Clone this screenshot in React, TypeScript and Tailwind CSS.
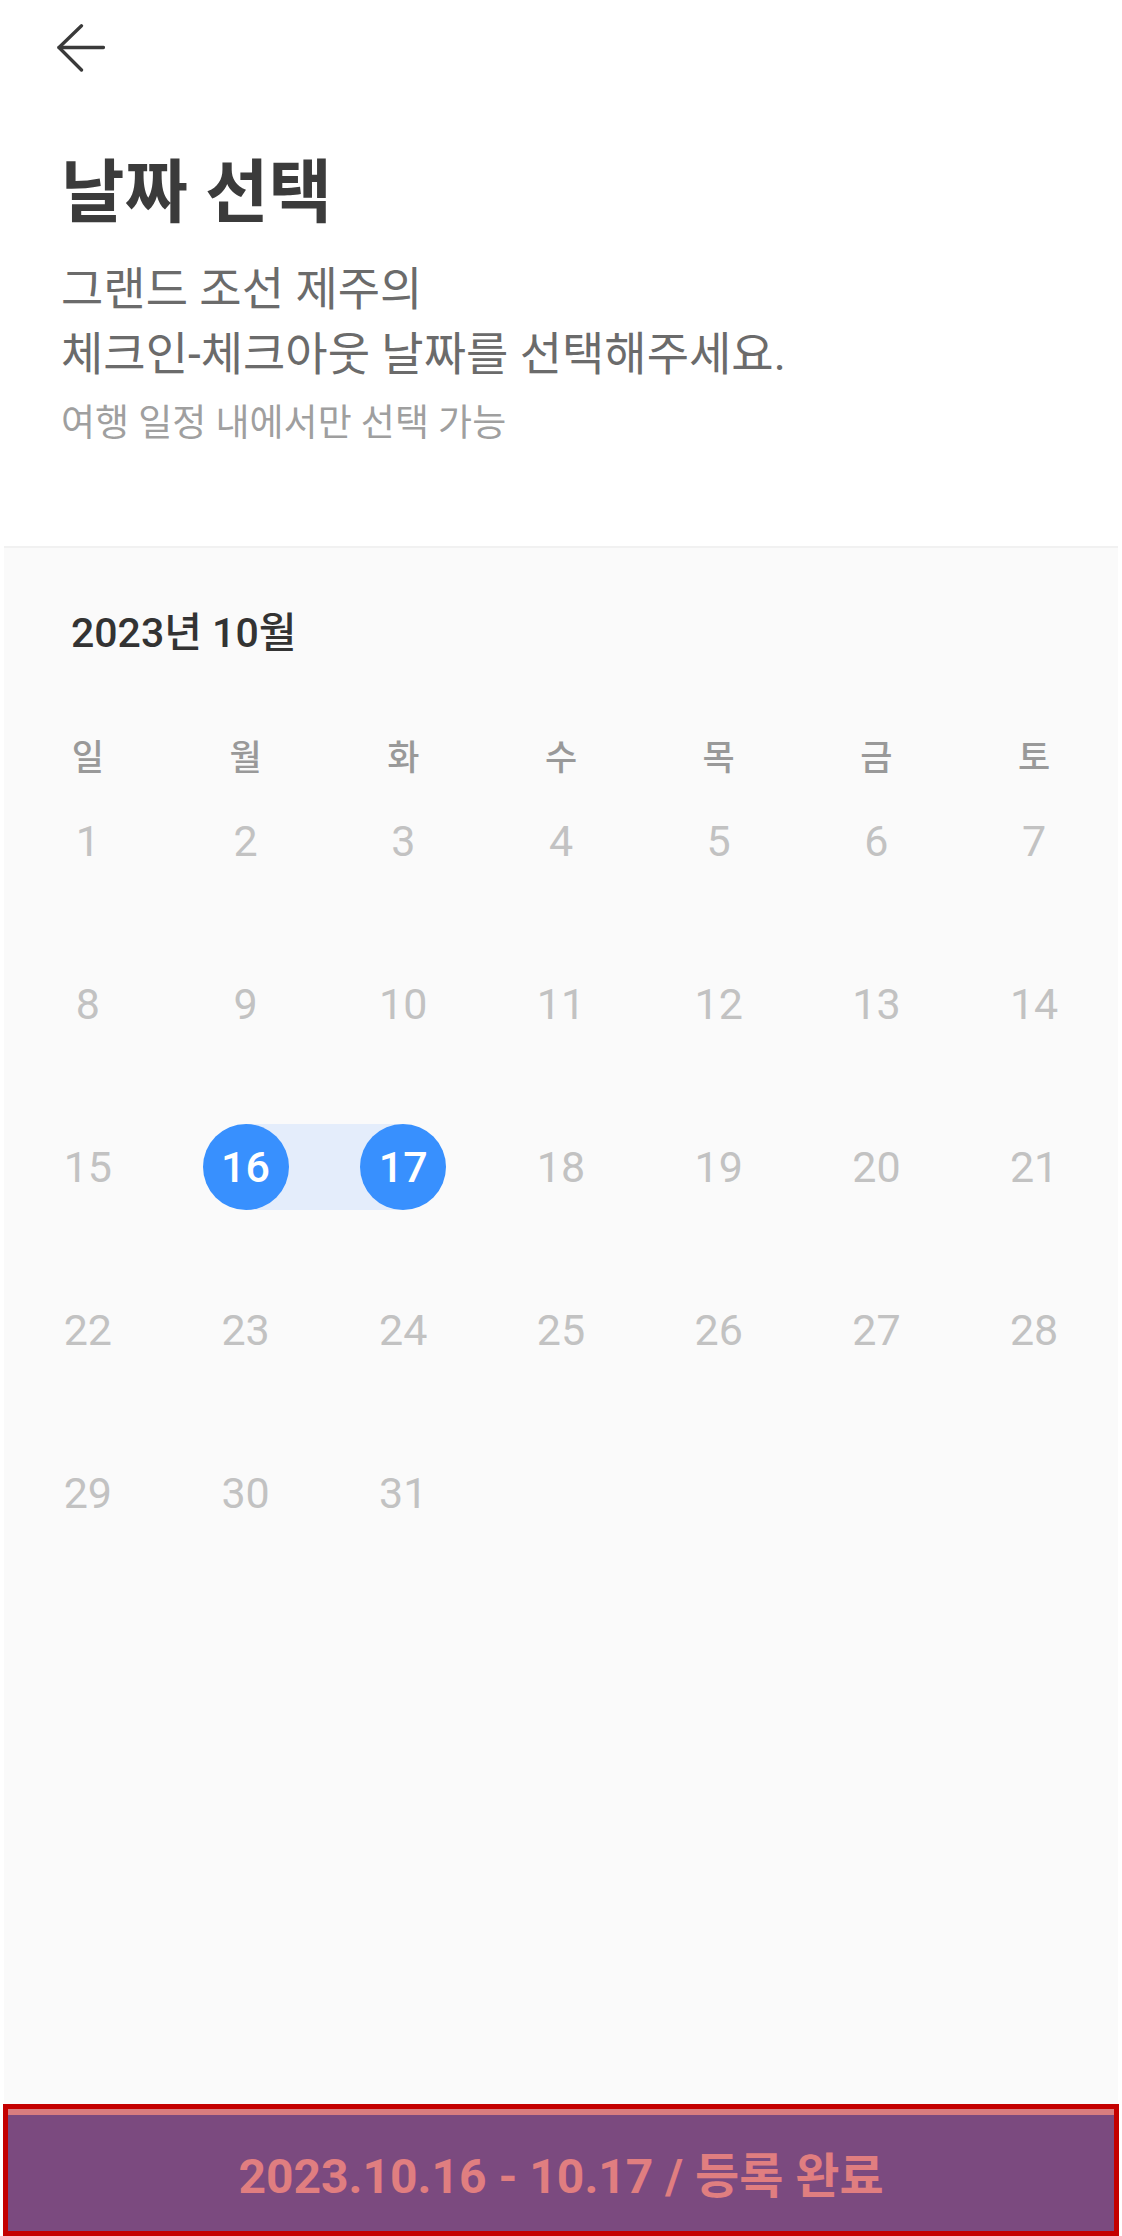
const WEEKDAYS = ['일', '월', '화', '수', '목', '금', '토'];

const START = 16;
const END = 17;

const days: (number | null)[] = Array.from({ length: 35 }, (_, i) => (i < 31 ? i + 1 : null));

const DayCell = ({ day }: { day: number | null }) => {
    if (day === null) return <div className="h-[86px]" />;
    const isStart = day === START;
    const isEnd = day === END;
    const selected = isStart || isEnd;
    return (
        <div className="relative h-[86px] flex items-center justify-center">
            {isStart && <div className="absolute inset-y-0 left-1/2 right-0 bg-[#e4edfb]" />}
            {isEnd && <div className="absolute inset-y-0 left-0 right-1/2 bg-[#e4edfb]" />}
            {selected ? (
                <div className="relative w-[86px] h-[86px] rounded-full bg-[#3890fe] flex items-center justify-center text-white text-[43px] leading-none font-medium">
                    {day}
                </div>
            ) : (
                <span className="text-[43px] leading-none text-[#c2c2c2]">{day}</span>
            )}
        </div>
    );
};

const App = () => {
    return (
        <div className="w-[1122px] h-[2236px] bg-white flex flex-col font-['Roboto','Noto_Sans_CJK_KR',sans-serif]">
            <header className="pt-[24px] pl-[57px]">
                <svg width="48" height="48" viewBox="0 0 48 48" fill="none" stroke="#3a3a3a" strokeWidth="3.3" strokeLinecap="round" strokeLinejoin="round">
                    <path d="M2 23.5H46.5" />
                    <path d="M24.5 1.8L2 23.5L24.5 46" />
                </svg>
            </header>

            <section className="pl-[61px]">
                <h1 className="mt-[87px] text-[69px] leading-[69px] font-bold text-[#3b3b3b]">날짜 선택</h1>
                <p className="mt-[29px] text-[46px] leading-[65px] text-[#6b6b6b]">
                    그랜드 조선 제주의
                    <br />
                    체크인-체크아웃 날짜를 선택해주세요.
                </p>
                <p className="mt-[18px] text-[37px] leading-[37px] text-[#9f9f9f]">여행 일정 내에서만 선택 가능</p>
            </section>

            <main className="mt-[104px] mx-[4px] flex-1 bg-[#fafafa] border-t-2 border-[#f1f1f1]">
                <h2 className="pt-[65px] pl-[67px] text-[41px] leading-[41px] font-medium text-[#333333]">2023년 10월</h2>
                <div className="mt-[85px] px-[5px] grid grid-cols-7">
                    {WEEKDAYS.map((w) => (
                        <div key={w} className="h-[40px] flex items-center justify-center text-[35px] font-medium text-[#999999]">
                            {w}
                        </div>
                    ))}
                </div>
                <div className="mt-[19px] px-[5px] grid grid-cols-7 gap-y-[77px]">
                    {days.map((d, i) => (
                        <DayCell key={i} day={d} />
                    ))}
                </div>
            </main>

            <button className="mx-[3px] h-[132px] border-[5px] border-[#c40000] bg-[#7b4a7f] flex flex-col">
                <div className="h-[6px] w-full bg-[#d97d7f]" />
                <div className="flex-1 flex items-center justify-center pt-[8px] text-[48px] leading-none font-bold text-[#e07e80]">
                    2023.10.16 - 10.17 / 등록 완료
                </div>
            </button>
        </div>
    );
};

export default App;
